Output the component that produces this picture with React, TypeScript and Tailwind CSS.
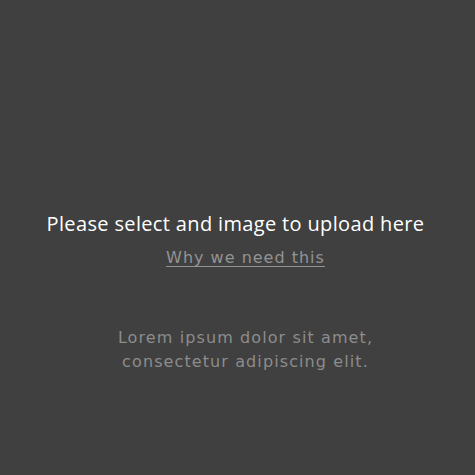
export default function App() {
  return (
    <div className="flex min-h-screen w-full flex-col items-center bg-[#404040] pt-[211px] text-center">
      <h1 className="pr-[4px] font-['Open_Sans',sans-serif] text-[20px] leading-[26px] tracking-[0.35px] text-white">
        Please select and image to upload here
      </h1>
      <a
        href="#"
        className="mt-[9px] pl-[16px] font-['DejaVu_Sans',sans-serif] text-[16px] leading-[24px] tracking-[1px] text-[#939393] underline underline-offset-[3px]"
      >
        Why we need this
      </a>
      <p className="mt-[56px] pl-[16px] font-['DejaVu_Sans',sans-serif] text-[16px] leading-[24px] tracking-[1.1px] text-[#8c8c8c]">
        Lorem ipsum dolor sit amet,
        <br />
        consectetur adipiscing elit.
      </p>
    </div>
  );
}
